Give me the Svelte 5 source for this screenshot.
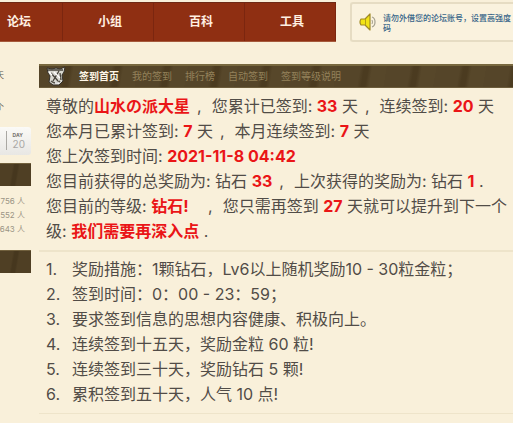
<script>
  const sections = ['论坛', '小组', '百科', '工具'];
  const tabs = ['签到首页', '我的签到', '排行榜', '自动签到', '签到等级说明'];
  const counts = ['756 人', '552 人', '643 人'];
  const rules = [
    '奖励措施：1颗钻石，Lv6以上随机奖励10 - 30粒金粒；',
    '签到时间：0：00 - 23：59；',
    '要求签到信息的思想内容健康、积极向上。',
    '连续签到十五天，奖励金粒 60 粒!',
    '连续签到三十天，奖励钻石 5 颗!',
    '累积签到五十天，人气 10 点!'
  ];
</script>

<div class="page">
  <header>
    <nav class="sections" aria-label="主导航">
      {#each sections as name}
        <a href="#top">{name}</a>
      {/each}
    </nav>
    <div class="notice">
      <svg width="18" height="18" viewBox="0 0 18 18" aria-hidden="true">
        <path d="M2 6h4l5-5v16l-5-5H2q-2-3 0-6z" fill="#f2e316" stroke="#a08a25" stroke-width="1.2" stroke-linejoin="round" />
        <path d="M6.500 6v6" stroke="#b4a017" />
        <path d="M13 4q3 1 3 5t-3 5" fill="none" stroke="#a5a08f" stroke-width="1.200" />
        <path d="M13 7q1 2 0 4" fill="none" stroke="#a5a08f" />
      </svg>
      <a href="#safety">请勿外借您的论坛账号，设置高强度<br />码</a>
    </div>
  </header>

  <div class="body">
    <aside>
      <p class="clip first">天</p>
      <p class="clip second">个</p>
      <div class="date"><span class="day"><small>DAY</small>20</span></div>
      <div class="bar"></div>
      <ul>
        {#each counts as count}
          <li>{count}</li>
        {/each}
      </ul>
      <div class="bar"></div>
    </aside>

    <main>
      <nav class="tabs" aria-label="签到">
        <svg width="20" height="20" viewBox="0 0 20 20" aria-hidden="true">
          <path d="M1 2l5 1 4-1 4 1 5-2-1 5-2 3 1 6-4 4H7l-4-3 1-6-2-3z" fill="#d9d8d0" stroke="#34302a" />
          <path d="M2 4h15M5 7l7 8M13 5l-6 10M14 7l1 7" fill="none" stroke="#46423a" stroke-width="1.3" />
          <path d="M5 15q5 4 9 0" fill="none" stroke="#56524a" stroke-width="1.5" />
          <path d="M8 6l6 6M9 17h4M3 6l3 3" fill="none" stroke="#fff" stroke-width="1.3" />
        </svg>
        {#each tabs as tab, i}
          <a href="#tab" class:current={i === 0}>{tab}</a>
        {/each}
      </nav>

      <section class="summary">
        <p>尊敬的<b>山水の派大星</b><i>,</i>您累计已签到: <b>33</b> 天<i>,</i>连续签到: <b>20</b> 天</p>
        <p>您本月已累计签到: <b>7</b> 天<i>,</i>本月连续签到: <b>7</b> 天</p>
        <p>您上次签到时间: <b>2021-11-8 04:42</b></p>
        <p>您目前获得的总奖励为: 钻石 <b>33</b><i>,</i>上次获得的奖励为: 钻石 <b>1</b> .</p>
        <p>您目前的等级: <b>钻石!</b>&ensp;&nbsp;<i>,</i>您只需再签到 <b>27</b> 天就可以提升到下一个</p>
        <p>级: <b>我们需要再深入点</b> .</p>
      </section>

      <ol>
        {#each rules as rule, i}
          <li><span>{i + 1}.</span>{rule}</li>
        {/each}
      </ol>
    </main>
  </div>
</div>

<style>
  :global(body) {
    margin: 0;
    background: #f9f0da;
  }
  .page {
    overflow: hidden;
    color: #514c47;
    font-family: Inter, 'Noto Sans CJK SC', sans-serif;
  }
  a {
    text-decoration: none;
  }
  p,
  ul,
  ol {
    margin: 0;
    padding: 0;
    list-style: none;
  }
  header {
    display: flex;
    gap: 14px;
    padding-top: 2px;
  }
  .sections {
    display: flex;
    flex: none;
    justify-content: flex-end;
    width: 336px;
    overflow: hidden;
    box-sizing: border-box;
    border-top: 1px solid #6f2a16;
    border-bottom: 1px solid #a65a3c;
    background: #8f2f12;
  }
  .sections a {
    flex: none;
    box-sizing: border-box;
    width: 91px;
    padding-left: 4px;
    border-right: 1px solid #7b260f;
    color: #fff0e2;
    font-size: 12px;
    font-weight: 700;
    line-height: 38px;
    text-align: center;
  }
  .notice {
    display: flex;
    flex: 1;
    gap: 6px;
    box-sizing: border-box;
    min-width: 0;
    padding: 9px 0 0 7px;
    border: 2px solid #e6dcc3;
    border-right: 0;
    border-radius: 3px 0 0 3px;
    background: #faf2de;
  }
  .notice svg {
    flex: none;
  }
  .notice a {
    color: #366488;
    font-size: 8px;
    font-weight: 500;
    line-height: 10px;
    white-space: nowrap;
  }
  .body {
    display: flex;
    gap: 8px;
    padding-top: 22px;
  }
  aside {
    flex: none;
    width: 31px;
    overflow: hidden;
    color: #9b9585;
    font-size: 8px;
  }
  .clip {
    margin-left: -4px;
    color: #5d584e;
    line-height: 12px;
  }
  .first {
    padding-top: 5px;
  }
  .second {
    padding-top: 20px;
  }
  .date {
    display: flex;
    justify-content: flex-end;
    margin: 14px 0 8px;
    padding: 4px 6px 5px 0;
    border-radius: 0 3px 3px 0;
    background: linear-gradient(#fbfaf7, #e8e7e4);
  }
  .day {
    padding-left: 6px;
    border-left: 1px solid #aaa8a3;
    color: #aaa8a5;
    font-size: 10px;
    line-height: 11px;
  }
  .day small {
    display: block;
    color: #77736d;
    font-size: 5px;
    font-weight: 700;
    line-height: 8px;
  }
  .bar {
    height: 23px;
    background: repeating-linear-gradient(100deg, #4f3f24 0 13px, #46371e 15px 18px, #4f3f24 20px 27px);
    box-shadow: inset 0 1px #71603d;
  }
  aside ul {
    display: flex;
    flex-direction: column;
    align-items: flex-end;
    padding: 8px 6px 14px 0;
  }
  aside li {
    line-height: 14px;
    white-space: nowrap;
  }
  main {
    flex: 1;
    min-width: 0;
  }
  .tabs {
    display: flex;
    align-items: center;
    gap: 13px;
    height: 24px;
    padding-left: 7px;
    box-shadow: inset 0 2px #78683f, inset 0 -1px #6c5c3b;
    background: repeating-linear-gradient(100deg, #554529 0 23px, #4b3b20 27px 31px, #57472a 35px 49px);
  }
  .tabs a {
    color: #93815a;
    font-size: 10px;
    line-height: 20px;
    white-space: nowrap;
  }
  .tabs .current {
    color: #fff7e8;
    font-weight: 700;
  }
  .summary,
  ol {
    padding: 6px 0 6px 7px;
    border-bottom: 2px solid #eee4ca;
    font-size: 16px;
    line-height: 25px;
    white-space: nowrap;
  }
  .summary b {
    color: #ea1517;
    font-weight: 700;
  }
  .summary i {
    margin: 0 10px 0 7px;
    font-style: normal;
  }
  ol {
    padding-top: 5px;
    border-bottom-width: 1px;
  }
  ol span {
    display: inline-block;
    width: 26px;
  }
</style>
